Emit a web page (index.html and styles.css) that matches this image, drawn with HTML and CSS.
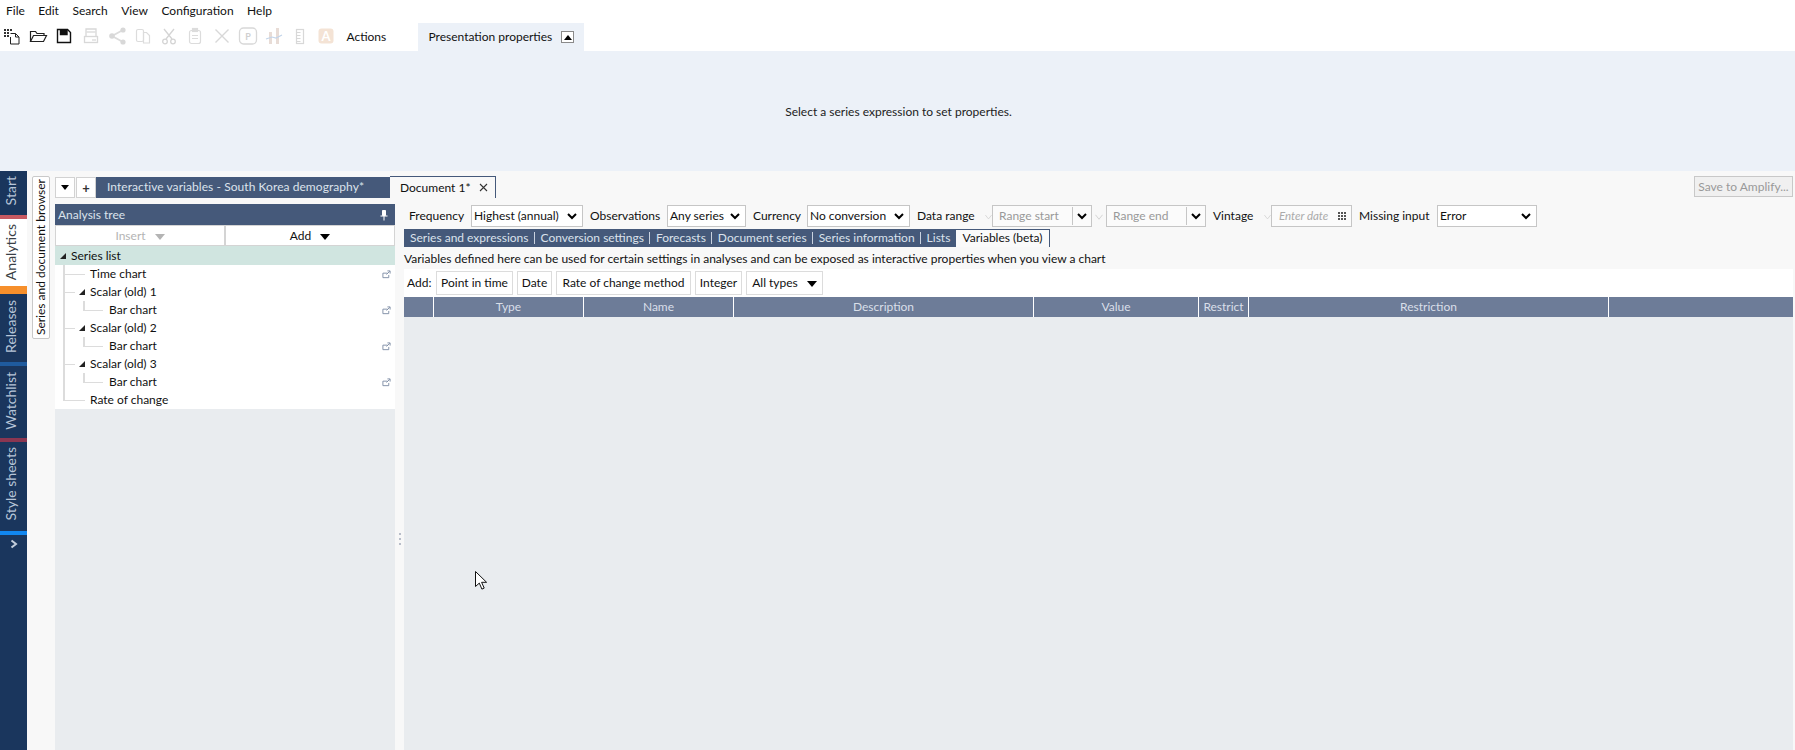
FILE: index.html
```html
<!DOCTYPE html>
<html lang="en">
<head>
<meta charset="utf-8">
<title>Macrobond</title>
<link rel="stylesheet" href="styles.css">
</head>
<body>
<div class="app">
  <nav class="menubar">
    <span>File</span><span>Edit</span><span>Search</span><span>View</span><span>Configuration</span><span>Help</span>
  </nav>
  <div class="toolbar">
    <div class="tools">
      <svg class="tool" viewBox="0 0 20 20" fill="none" stroke="#222"><g fill="#333" stroke="none"><rect x="2" y="3" width="2" height="2"/><rect x="5" y="3" width="2" height="2"/><rect x="8" y="3" width="2" height="2"/><rect x="2" y="6" width="2" height="2"/><rect x="5" y="6" width="2" height="2"/><rect x="2" y="9" width="2" height="2"/><rect x="5" y="9" width="2" height="2"/></g><path d="M8.5 7.5h5l3.500 3.500v7h-8.500v-7"/><path d="M13.500 7.500v3.500h3.500"/></svg>
      <svg class="tool" viewBox="0 0 20 20" fill="none" stroke="#222" stroke-width="1.200"><path d="M2.500 15.500v-10h5l1.500 2h7v2"/><path d="M2.500 15.500l3-6h13l-3 6z"/></svg>
      <svg class="tool" viewBox="0 0 20 20" fill="none" stroke="#111" stroke-width="1.400"><path d="M3.500 3.500h10l3 3v10h-13z"/><path d="M6.500 3.500v5h6.500v-5" fill="#111"/></svg>
      <svg class="tool" viewBox="0 0 20 20" fill="none" stroke="#d8d8d8" stroke-width="1.300"><path d="M5 10v-7h10v7"/><path d="M5.500 6h9"/><rect x="3.500" y="10.500" width="13" height="6"/><path d="M11 14h4"/></svg>
      <svg class="tool" viewBox="0 0 20 20" fill="none" stroke="#dcdcdc" stroke-width="1.800"><path d="M16 4l-11 6 11 6"/><g fill="#d8d8d8" stroke="none"><circle cx="16" cy="4" r="2.600"/><circle cx="5" cy="10" r="2.800"/><circle cx="16" cy="16" r="2.600"/></g></svg>
      <svg class="tool" viewBox="0 0 20 20" fill="none" stroke="#dcdcdc" stroke-width="1.200"><rect x="3.500" y="3.500" width="7" height="12" rx="1.500"/><path d="M10.500 6.500h3l3 3v7.500h-6z"/></svg>
      <svg class="tool" viewBox="0 0 20 20" fill="none" stroke="#d4d4d4" stroke-width="1.300"><path d="M5 3l8 10M15 3l-8 10"/><circle cx="6" cy="15.500" r="2.300"/><circle cx="14" cy="15.500" r="2.300"/></svg>
      <svg class="tool" viewBox="0 0 20 20" fill="none" stroke="#dcdcdc" stroke-width="1.200"><rect x="4.500" y="4.500" width="11" height="13" rx="2"/><rect x="7.500" y="2.500" width="5" height="3" fill="#dcdcdc"/><path d="M7 9.500h6M7 12.500h6"/></svg>
      <svg class="tool" viewBox="0 0 20 20" fill="none" stroke="#d8d8d8" stroke-width="1.400"><path d="M3.500 3.500l13 13M16.500 3.500l-13 13"/></svg>
      <svg class="tool" viewBox="0 0 20 20" fill="none" stroke="#d8d8d8" stroke-width="1.300"><rect x="1.500" y="2" width="17" height="16" rx="4"/><text x="10" y="13.500" class="tool-p">P</text></svg>
      <svg class="tool" viewBox="0 0 20 20"><g fill="#e8dcd6"><rect x="5" y="6" width="3" height="12"/><rect x="12" y="2" width="3" height="16"/></g><path d="M2 13l6-2 4 1 6-3" fill="none" stroke="#c3d5ea" stroke-width="1.200"/></svg>
      <svg class="tool" viewBox="0 0 20 20" fill="none" stroke="#d8d8d8" stroke-width="1.200"><rect x="6.500" y="3.500" width="7" height="14"/><path d="M6.500 6.500h4M6.500 9.500h4M6.500 12.500h4M6.500 15.500h4"/></svg>
      <svg class="tool" viewBox="0 0 20 20"><rect x="2.500" y="2.500" width="15" height="15" rx="3" fill="#f4e3d5"/><text x="10" y="15" class="tool-a">A</text></svg>
    </div>
    <span class="actions">Actions</span>
    <div class="prop-tab">
      <span>Presentation properties</span>
      <span class="collapse"><i class="tri-up"></i></span>
    </div>
  </div>
  <div class="props-panel">Select a series expression to set properties.</div>

  <div class="lower">
    <aside class="sidebar">
      <div class="side-tab side-start"><span>Start</span></div>
      <div class="side-tab side-analytics is-active"><span>Analytics</span></div>
      <div class="side-tab side-releases"><span>Releases</span></div>
      <div class="side-tab side-watchlist"><span>Watchlist</span></div>
      <div class="side-tab side-style"><span>Style sheets</span></div>
      <svg class="side-more" viewBox="0 0 10 10" fill="none" stroke="#c3cedc" stroke-width="2"><path d="M2.500 1.500l4.500 3.500-4.500 3.500"/></svg>
    </aside>
    <div class="vcol"><div class="vtab"><span>Series and document browser</span></div></div>
    <div class="work">
      <div class="docbar">
        <button class="mini"><i class="tri-down"></i></button>
        <button class="mini mini-plus">+</button>
        <div class="doc-other">Interactive variables - South Korea demography*</div>
        <div class="doc-active"><span>Document 1*</span><svg class="doc-x" viewBox="0 0 9 9" fill="none" stroke="#333" stroke-width="1.100"><path d="M1 1l7 7M8 1l-7 7"/></svg></div>
        <button class="amplify">Save to Amplify...</button>
      </div>
      <div class="columns">
        <section class="left">
          <header class="tree-head"><span>Analysis tree</span>
            <svg class="pin" viewBox="0 0 10 12" fill="none" stroke="#fff"><path d="M3.500 1.500h3v5h-3z" fill="#fff"/><path d="M1.500 7h7M5 7v4.500"/></svg>
          </header>
          <div class="tree-actions">
            <button class="tree-btn is-off">Insert<i class="tri-down tri-big tri-off"></i></button>
            <button class="tree-btn">Add<i class="tri-down tri-big"></i></button>
          </div>
          <div class="tree-root"><svg class="exp" viewBox="0 0 6 6"><path d="M6 0v6H0z"/></svg>Series list</div>
          <div class="tree">
            <div class="node"><i class="conn conn-long"></i><span>Time chart</span><svg class="open" viewBox="0 0 10 10" fill="none" stroke="#7b8aa3"><path d="M6 3.500H1v5h6.500V5.500"/><path d="M5 5l3.500-3.500M6 1h3v3"/></svg></div>
            <div class="node"><i class="conn"></i><svg class="exp" viewBox="0 0 6 6"><path d="M6 0v6H0z"/></svg><span>Scalar (old) 1</span></div>
            <div class="node node-sub"><i class="elbow"></i><span>Bar chart</span><svg class="open" viewBox="0 0 10 10" fill="none" stroke="#7b8aa3"><path d="M6 3.500H1v5h6.500V5.500"/><path d="M5 5l3.500-3.500M6 1h3v3"/></svg></div>
            <div class="node"><i class="conn"></i><svg class="exp" viewBox="0 0 6 6"><path d="M6 0v6H0z"/></svg><span>Scalar (old) 2</span></div>
            <div class="node node-sub"><i class="elbow"></i><span>Bar chart</span><svg class="open" viewBox="0 0 10 10" fill="none" stroke="#7b8aa3"><path d="M6 3.500H1v5h6.500V5.500"/><path d="M5 5l3.500-3.500M6 1h3v3"/></svg></div>
            <div class="node"><i class="conn"></i><svg class="exp" viewBox="0 0 6 6"><path d="M6 0v6H0z"/></svg><span>Scalar (old) 3</span></div>
            <div class="node node-sub"><i class="elbow"></i><span>Bar chart</span><svg class="open" viewBox="0 0 10 10" fill="none" stroke="#7b8aa3"><path d="M6 3.500H1v5h6.500V5.500"/><path d="M5 5l3.500-3.500M6 1h3v3"/></svg></div>
            <div class="node"><i class="conn conn-long"></i><span>Rate of change</span></div>
          </div>
        </section>
        <div class="splitter"><i></i><i></i><i></i></div>
        <section class="right">
          <div class="filters">
            <label class="lbl lbl-freq">Frequency</label>
            <div class="sel sel-freq">Highest (annual)<svg class="chev" viewBox="0 0 10 7"><path d="M1 1l4 4 4-4" /></svg></div>
            <label class="lbl lbl-obs">Observations</label>
            <div class="sel sel-obs">Any series<svg class="chev" viewBox="0 0 10 7"><path d="M1 1l4 4 4-4" /></svg></div>
            <label class="lbl lbl-cur">Currency</label>
            <div class="sel sel-cur">No conversion<svg class="chev" viewBox="0 0 10 7"><path d="M1 1l4 4 4-4" /></svg></div>
            <label class="lbl lbl-range">Data range</label>
            <svg class="faint" viewBox="0 0 9 6"><path d="M.5.5l4 5 4-5"/></svg>
            <div class="combo"><span class="combo-text">Range start</span><span class="combo-btn"><svg class="chev" viewBox="0 0 10 7"><path d="M1 1l4 4 4-4" /></svg></span></div>
            <svg class="faint faint-wide" viewBox="0 0 9 6"><path d="M.5.5l4 5 4-5"/></svg>
            <div class="combo"><span class="combo-text">Range end</span><span class="combo-btn"><svg class="chev" viewBox="0 0 10 7"><path d="M1 1l4 4 4-4" /></svg></span></div>
            <label class="lbl lbl-vin">Vintage</label>
            <svg class="faint" viewBox="0 0 9 6"><path d="M.5.5l4 5 4-5"/></svg>
            <div class="date"><em>Enter date</em><svg class="date-ico" viewBox="0 0 8 8" fill="#555"><rect width="2" height="2"/><rect x="3" width="2" height="2"/><rect x="6" width="2" height="2"/><rect y="3" width="2" height="2"/><rect x="3" y="3" width="2" height="2"/><rect x="6" y="3" width="2" height="2"/><rect y="6" width="2" height="2"/><rect x="3" y="6" width="2" height="2"/><rect x="6" y="6" width="2" height="2"/></svg></div>
            <label class="lbl lbl-mis">Missing input</label>
            <div class="sel sel-mis">Error<svg class="chev" viewBox="0 0 10 7"><path d="M1 1l4 4 4-4" /></svg></div>
          </div>
          <div class="subtabs">
            <div class="subtab-group">
              <span>Series and expressions</span><i></i><span>Conversion settings</span><i></i><span>Forecasts</span><i></i><span>Document series</span><i></i><span>Series information</span><i></i><span>Lists</span>
            </div>
            <div class="subtab-active">Variables (beta)</div>
          </div>
          <p class="desc">Variables defined here can be used for certain settings in analyses and can be exposed as interactive properties when you view a chart</p>
          <div class="addrow">
            <span class="add-label">Add:</span>
            <button class="add-btn add-point">Point in time</button>
            <button class="add-btn add-date">Date</button>
            <button class="add-btn add-rate">Rate of change method</button>
            <button class="add-btn add-int">Integer</button>
            <button class="add-btn add-types">All types<i class="tri-down tri-big"></i></button>
          </div>
          <div class="thead">
            <div></div><div>Type</div><div>Name</div><div>Description</div><div>Value</div><div>Restrict</div><div>Restriction</div><div></div>
          </div>
          <div class="tbody"></div>
        </section>
      </div>
    </div>
  </div>
  <svg class="cursor" viewBox="0 0 12 19"><path d="M.5.5v15l3.800-3.400 2.600 6 2.300-1-2.600-5.800h5z" fill="#fff" stroke="#111"/></svg>
</div>
</body>
</html>
```
FILE: styles.css
```css
* { box-sizing: border-box; }
html, body { margin: 0; height: 100%; overflow: hidden; background: #fff; }
body { font: 12px/16px "Lato", "Liberation Sans", sans-serif; color: #111; }
button { font: inherit; color: inherit; margin: 0; padding: 0; background: #fff; }
p { margin: 0; }
i { display: block; }

.app { height: 750px; display: flex; flex-direction: column; position: relative; }

/* top menu */
.menubar { height: 23px; flex: none; display: flex; gap: 13.500px; padding: 3px 0 0 6px; }

/* toolbar */
.toolbar { height: 28px; flex: none; display: flex; align-items: stretch; }
.tools { display: flex; align-items: center; margin-left: -1px; padding-bottom: 3px; }
.tool { width: 20px; height: 20px; margin: 0 3.100px; flex: none; }
.tool-p { font: 700 9px "Lato", sans-serif; fill: #d0d0d0; stroke: none; text-anchor: middle; }
.tool-a { font: 700 13px "Lato", sans-serif; fill: #fff; text-anchor: middle; }
.actions { width: 72px; margin-left: 7px; align-self: center; }
.prop-tab { width: 166px; background: #ecf1f8; display: flex; align-items: center; padding: 0 10px; justify-content: space-between; }
.collapse { width: 13px; height: 12px; background: #fff; border: 1px solid #8a8a8a; display: flex; align-items: center; justify-content: center; }

.tri-up { width: 0; height: 0; border: 4px solid transparent; border-top: 0; border-bottom: 5px solid #000; }
.tri-down { width: 0; height: 0; border: 4px solid transparent; border-bottom: 0; border-top: 5px solid #000; }
.tri-big { display: inline-block; border-width: 6px 5px 0; vertical-align: 0; margin-left: 9px; }
.tri-off { border-top-color: #b4b4b4; }

.props-panel { height: 120px; flex: none; background: #ecf1f8; display: flex; align-items: center; justify-content: center; padding: 2px 0 0 2px; color: #222; }

/* lower workspace */
.lower { flex: 1; min-height: 0; display: flex; background: #f8f8f8; }

.sidebar { width: 27px; flex: none; background: #1a365d; display: flex; flex-direction: column; align-items: stretch; }
.side-tab { display: flex; align-items: center; justify-content: center; color: #b7c5d8; font-size: 14px; line-height: 27px; flex: none; padding-right: 7px; }
.side-tab span { writing-mode: vertical-rl; transform: rotate(180deg); }
.side-start { height: 48px; border-bottom: 4px solid #c85a62; padding-bottom: 4px; }
.side-analytics { height: 75px; border-bottom: 8px solid #f68f2b; background: #fff; color: #3a3f47; }
.side-releases { height: 72px; border-bottom: 4px solid #1f5b9e; padding-bottom: 4px; }
.side-watchlist { height: 76px; border-bottom: 4px solid #8a3651; padding-bottom: 2px; }
.side-style { height: 93px; border-bottom: 4px solid #1187f0; padding-bottom: 5px; }
.side-more { width: 10px; height: 10px; margin: 4px 0 0 9px; }

.vcol { width: 28px; flex: none; padding: 5px 0 0 5px; }
.vtab { width: 18px; height: 163px; background: #fff; border: 1px solid #c9c9c9; border-radius: 2px; display: flex; align-items: center; justify-content: center; }
.vtab span { writing-mode: vertical-rl; transform: rotate(180deg); white-space: nowrap; line-height: 16px; }

.work { flex: 1; min-width: 0; display: flex; flex-direction: column; padding-right: 2px; }

.docbar { height: 33px; flex: none; display: flex; align-items: flex-start; padding-top: 5px; }
.mini { width: 20px; height: 21px; margin-top: 1px; margin-right: 1px; background: #fff; border: 1px solid #d2d2d2; display: flex; align-items: center; justify-content: center; flex: none; }
.mini-plus { font-size: 13px; font-weight: 700; color: #333; margin-right: 0; }
.doc-other { width: 294px; height: 21px; margin-top: 1px; background: #45597a; color: #dce3ec; padding: 2px 0 0 11px; flex: none; letter-spacing: .06px; }
.doc-active { width: 106px; height: 22px; background: #f8f8f8; border-top: 1px solid #45597a; border-right: 1px solid #45597a; display: flex; align-items: center; padding-left: 10px; flex: none; }
.doc-x { width: 9px; height: 9px; margin-left: 8px; }
.amplify { margin-left: auto; width: 99px; height: 21px; background: #f0f0f0; border: 1px solid #c8c8c8; color: #999; padding: 1px 0 0; }

.columns { flex: 1; min-height: 0; display: flex; }

/* analysis tree */
.left { width: 340px; flex: none; background: #e9ecef; display: flex; flex-direction: column; }
.tree-head { height: 21px; background: #45597a; color: #dbe2ec; display: flex; align-items: center; justify-content: space-between; padding: 0 6px 0 3px; }
.pin { width: 10px; height: 12px; }
.tree-actions { height: 21px; display: flex; background: #d4d4d4; padding: 1px 1px 0; gap: 2px; }
.tree-btn { flex: 1; border: 0; background: #fff; border-bottom: 1px solid #d4d4d4; }
.tree-btn.is-off { color: #b4b4b4; }
.tree-root { height: 19px; background: #d0e5e0; display: flex; align-items: center; padding-left: 5px; }
.exp { width: 6px; height: 6px; flex: none; margin-right: 5px; fill: #222; }
.tree { height: 144px; background: #fff linear-gradient(#dcdcdc, #dcdcdc) 8px 0 / 2px 136px no-repeat; }
.node { height: 18px; display: flex; align-items: center; padding-left: 10px; }
.node .open { margin-left: auto; margin-right: 4px; }
.open { width: 9px; height: 9px; flex: none; }
.conn { width: 10px; height: 1px; background: #dcdcdc; margin-right: 4px; flex: none; }
.conn-long { width: 20px; margin-right: 5px; }
.node > .exp { margin-right: 5px; }
.node-sub { padding-left: 28px; }
.elbow { width: 20px; height: 10px; align-self: flex-start; border-left: 2px solid #dcdcdc; border-bottom: 1px solid #dcdcdc; margin-right: 6px; flex: none; }

.splitter { width: 9px; flex: none; padding: 329px 0 0 4px; display: flex; flex-direction: column; gap: 3px; }
.splitter i { width: 2px; height: 2px; background: #b8bdc9; }

/* right pane */
.right { flex: 1; min-width: 0; display: flex; flex-direction: column; }
.filters { height: 25px; flex: none; padding: 1px 0 0 5px; display: flex; align-items: flex-start; }
.lbl { height: 22px; line-height: 22px; flex: none; }
.lbl-freq { width: 62px; }
.lbl-obs { width: 77px; margin-left: 7px; }
.lbl-cur { width: 54px; margin-left: 7px; }
.lbl-range { width: 68px; margin-left: 7px; }
.lbl-vin { width: 51px; margin-left: 7px; }
.lbl-mis { width: 78px; margin-left: 7px; }
.sel { height: 22px; background: #fff; border: 1px solid #c6c6c6; display: flex; align-items: center; justify-content: space-between; padding: 0 5px 0 2px; flex: none; }
.sel-freq { width: 112px; }
.sel-obs { width: 79px; }
.sel-cur { width: 103px; }
.sel-mis { width: 100px; }
.chev { width: 10px; height: 7px; flex: none; fill: none; stroke: #000; stroke-width: 2; }
.faint { width: 7px; height: 6px; margin-top: 9px; fill: none; stroke: #d0d0d0; flex: none; }
.faint-wide { width: 14px; padding: 0 3px; }
.combo { width: 100px; height: 22px; border: 1px solid #c6c6c6; background: #fbfbfb; display: flex; flex: none; color: #999; }
.combo-text { flex: 1; padding: 2px 0 0 6px; }
.combo-btn { width: 19px; border-left: 1px solid #c6c6c6; display: flex; align-items: center; justify-content: center; margin: 1px 0; }
.date { width: 81px; height: 22px; margin-left: 0; border: 1px solid #c6c6c6; background: #fbfbfb; display: flex; align-items: center; justify-content: space-between; padding: 0 5px 0 7px; flex: none; color: #aaa; }
.date em { font-size: 11.500px; }
.date-ico { width: 8px; height: 8px; }

.subtabs { height: 18px; flex: none; display: flex; }
.subtab-group { width: 551px; background: #45597a; color: #dbe2ec; display: flex; align-items: center; padding-left: 6px; gap: 6px; flex: none; white-space: nowrap; }
.subtab-group i { width: 1px; height: 12px; background: #c9d2df; flex: none; margin-left: -1px; }
.subtab-active { width: 95px; border: 1px solid #45597a; border-bottom: 0; background: #fafafa; text-align: center; line-height: 16px; }

.desc { height: 22px; flex: none; line-height: 24px; white-space: nowrap; color: #111; }

.addrow { height: 28px; flex: none; background: #fff; display: flex; align-items: center; padding-left: 3px; gap: 4px; }
.add-label { width: 25px; }
.add-btn { height: 24px; background: #fff; border: 1px solid #dcdcdc; white-space: nowrap; flex: none; }
.add-point { width: 77px; }
.add-date { width: 35px; }
.add-rate { width: 135px; }
.add-int { width: 47px; }
.add-types { width: 77px; }

.thead { height: 20px; flex: none; background: #6d7c98; color: #d9dfe9; display: grid; grid-template-columns: 30px 150px 150px 300px 165px 50px 360px 1fr; }
.thead div { border-right: 1px solid #fff; text-align: center; line-height: 20px; white-space: nowrap; }
.thead div:last-child { border-right: 0; }
.tbody { flex: 1; background: #e9ecef; }

.cursor { position: absolute; left: 475px; top: 571px; width: 12px; height: 19px; }
```
